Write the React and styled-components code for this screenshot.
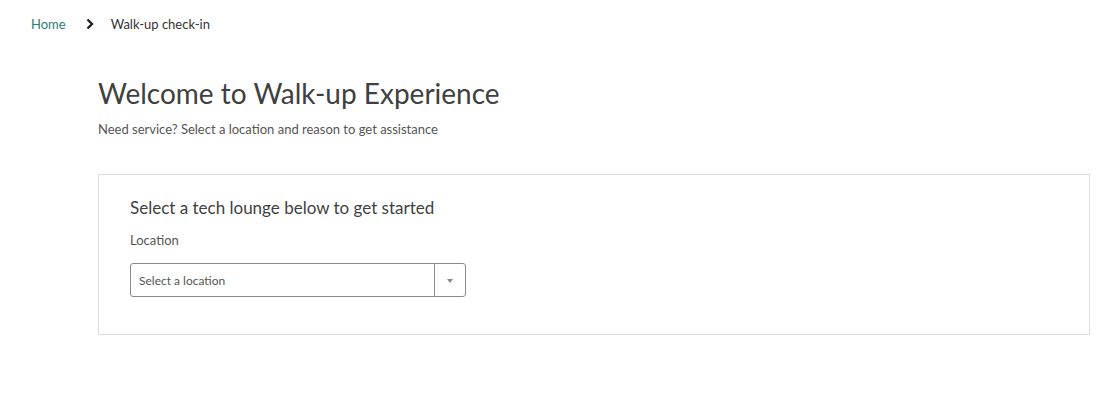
import styled, { createGlobalStyle } from 'styled-components'

const GlobalStyle = createGlobalStyle`
    body {
        margin: 0;
        background: #fff;
        font-family: Lato, "Noto Sans", "Liberation Sans", sans-serif;
        color: #3f3f3f;
    }
`

const Page = styled.div`
    padding: 14px 0 0 31px;
`

const Breadcrumb = styled.nav`
    display: flex;
    align-items: center;
    height: 20px;
    font-size: 13px;
`

const CrumbLink = styled.a`
    color: #2a7d7b;
    text-decoration: none;
`

const CrumbCurrent = styled.span`
    color: #333;
`

const Chevron = styled.svg`
    width: 10px;
    height: 12px;
    margin: 0 16px 0 19px;
`

const Main = styled.main`
    padding: 41px 25px 0 67px;
`

const Title = styled.h1`
    margin: 0;
    font-size: 28px;
    font-weight: 400;
    line-height: 36px;
    color: #404040;
`

const Subtitle = styled.p`
    margin: 9px 0 0;
    font-size: 13px;
    line-height: 18px;
    color: #555;
`

const Card = styled.section`
    margin-top: 36px;
    border: 1px solid #dcdcdc;
    padding: 22px 31px 37px;
`

const CardTitle = styled.h2`
    margin: 0;
    font-size: 17px;
    font-weight: 400;
    line-height: 22px;
    color: #3f3f3f;
`

const Label = styled.label`
    display: block;
    margin-top: 12px;
    font-size: 13px;
    line-height: 18px;
    color: #555;
`

const Select = styled.div`
    margin-top: 14px;
    width: 334px;
    height: 32px;
    display: flex;
    border: 1px solid #8a8a8a;
    border-radius: 3px;
`

const Placeholder = styled.span`
    flex: 1;
    display: flex;
    align-items: center;
    padding-left: 8px;
    font-size: 12px;
    color: #555;
`

const ArrowBox = styled.span`
    width: 30px;
    border-left: 1px solid #8a8a8a;
    display: flex;
    align-items: center;
    justify-content: center;
`

const Caret = styled.span`
    width: 0;
    height: 0;
    border-left: 3px solid transparent;
    border-right: 3px solid transparent;
    border-top: 4px solid #888;
    margin-top: 1px;
`

const App = () => {
    return (
        <Page>
            <GlobalStyle />
            <Breadcrumb>
                <CrumbLink href="#">Home</CrumbLink>
                <Chevron viewBox="0 0 10 12">
                    <path d="M2.5 1.5 L7 6 L2.5 10.5" fill="none" stroke="#222" strokeWidth="2.4" />
                </Chevron>
                <CrumbCurrent>Walk-up check-in</CrumbCurrent>
            </Breadcrumb>
            <Main>
                <Title>Welcome to Walk-up Experience</Title>
                <Subtitle>Need service? Select a location and reason to get assistance</Subtitle>
                <Card>
                    <CardTitle>Select a tech lounge below to get started</CardTitle>
                    <Label>Location</Label>
                    <Select>
                        <Placeholder>Select a location</Placeholder>
                        <ArrowBox><Caret /></ArrowBox>
                    </Select>
                </Card>
            </Main>
        </Page>
    )
}

export default App
